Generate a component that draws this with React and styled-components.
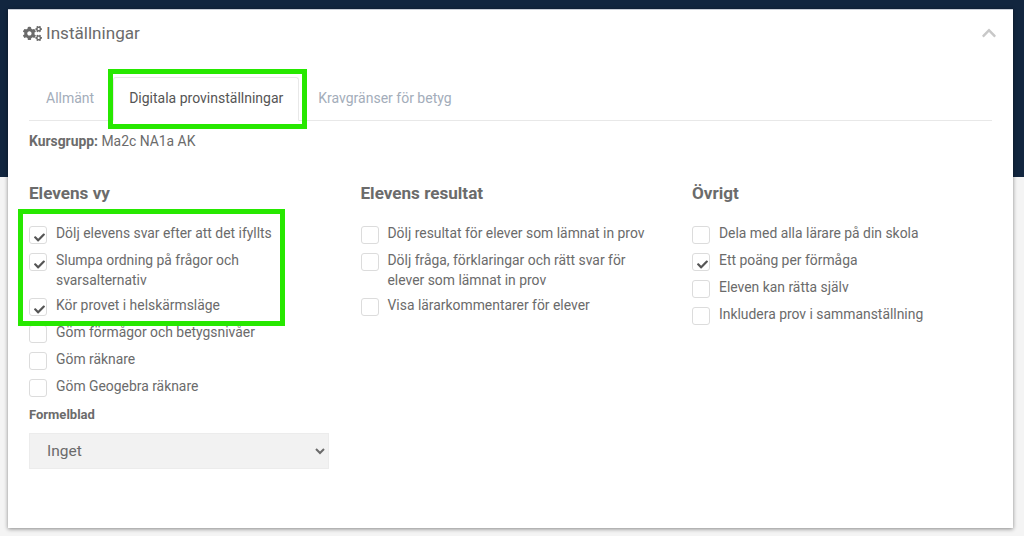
import React from 'react';
import styled, { createGlobalStyle } from 'styled-components';
import { FaCogs, FaChevronUp, FaCheck } from 'react-icons/fa';

const GlobalStyle = createGlobalStyle`
  html, body {
    margin: 0;
    padding: 0;
    overflow: hidden;
  }
  body {
    font-family: Roboto, "Liberation Sans", sans-serif;
    color: #6b6b6b;
  }
`;

const Page = styled.div`
  width: 1024px;
  height: 536px;
  padding: 9px 11px 0 8px;
  box-sizing: border-box;
  background: linear-gradient(#12263f 177px, #f4f4f4 177px);
`;

const Card = styled.div`
  position: relative;
  height: 519px;
  box-sizing: border-box;
  background: #fff;
  border-top: 1px solid #c9ced6;
  box-shadow: 0 1px 4px rgba(0, 0, 0, 0.45);
`;

const CardHeader = styled.div`
  display: flex;
  align-items: center;
  justify-content: space-between;
  height: 46px;
  padding: 0 16px 0 15px;
`;

const Title = styled.h3`
  display: flex;
  align-items: center;
  gap: 4px;
  margin: 0;
  font-size: 17.1px;
  font-weight: 400;
  color: #6b6b6b;
`;

const Collapse = styled.span`
  display: flex;
  color: #c8c8c8;
  font-size: 16px;
`;

const CardBody = styled.div`
  padding: 21px 21px 0 21px;
`;

const Tabs = styled.div`
  display: flex;
  gap: 3px;
  height: 44px;
  box-sizing: border-box;
  border-bottom: 1px solid #e8e8e8;
  padding-left: 1px;
`;

const Tab = styled.div`
  box-sizing: border-box;
  height: 44px;
  padding: 11px 15px 0;
  font-size: 14px;
  line-height: 18px;
  color: ${(p) => (p.$active ? '#555' : '#a3adba')};
  background: ${(p) => (p.$active ? '#fff' : 'transparent')};
  border: 1px solid ${(p) => (p.$active ? '#e8e8e8' : 'transparent')};
  border-bottom-color: ${(p) => (p.$active ? '#fff' : 'transparent')};
  border-radius: 3px 3px 0 0;
`;

const Group = styled.div`
  margin-top: 10px;
  font-size: 13.9px;
  line-height: 20px;
  color: #6b6b6b;
`;

const Columns = styled.div`
  display: grid;
  grid-template-columns: repeat(3, 331.5px);
  margin-top: 32px;
`;

const Heading = styled.h4`
  margin: 0 0 20px;
  font-size: 17.1px;
  line-height: 20px;
  font-weight: 700;
  color: #6b6b6b;
`;

const Options = styled.div`
  display: flex;
  flex-direction: column;
  gap: 5px;
  width: 300px;
`;

const Option = styled.div`
  display: flex;
  gap: 9px;
  font-size: 13.9px;
  line-height: 20px;
  color: #6b6b6b;
`;

const Box = styled.span`
  flex: none;
  display: flex;
  align-items: center;
  justify-content: center;
  width: 18px;
  height: 18px;
  margin: 3px 0 1px;
  padding: 4px 0 0 2px;
  box-sizing: border-box;
  border: 1px solid #dcdcdc;
  border-radius: 3px;
  background: #fff;
  color: #555;
  font-size: 11px;
`;

const FieldLabel = styled.div`
  margin-top: 9px;
  font-size: 13px;
  line-height: 16px;
  font-weight: 700;
  color: #6b6b6b;
`;

const Select = styled.select`
  display: block;
  width: 300px;
  height: 36px;
  margin-top: 10px;
  padding: 0 0 0 13px;
  border: 1px solid #ececec;
  border-radius: 0;
  background-color: #f2f2f2;
  font-family: Roboto, "Liberation Sans", sans-serif;
  font-size: 15.5px;
  color: #6b6b6b;
  outline: none;
`;

const Highlight = styled.div`
  position: absolute;
  box-sizing: border-box;
  border: 5px solid #27e800;
  left: ${(p) => p.$left}px;
  top: ${(p) => p.$top}px;
  width: ${(p) => p.$width}px;
  height: ${(p) => p.$height}px;
`;

const columns = [
  {
    title: 'Elevens vy',
    options: [
      ['Dölj elevens svar efter att det ifyllts', true],
      ['Slumpa ordning på frågor och svarsalternativ', true],
      ['Kör provet i helskärmsläge', true],
      ['Göm förmågor och betygsnivåer', false],
      ['Göm räknare', false],
      ['Göm Geogebra räknare', false],
    ],
    formula: true,
  },
  {
    title: 'Elevens resultat',
    options: [
      ['Dölj resultat för elever som lämnat in prov', false],
      ['Dölj fråga, förklaringar och rätt svar för elever som lämnat in prov', false],
      ['Visa lärarkommentarer för elever', false],
    ],
  },
  {
    title: 'Övrigt',
    options: [
      ['Dela med alla lärare på din skola', false],
      ['Ett poäng per förmåga', true],
      ['Eleven kan rätta själv', false],
      ['Inkludera prov i sammanställning', false],
    ],
  },
];

const App = () => (
  <Page>
    <GlobalStyle />
    <Card>
      <CardHeader>
        <Title>
          <FaCogs size={19} />
          Inställningar
        </Title>
        <Collapse><FaChevronUp /></Collapse>
      </CardHeader>
      <CardBody>
        <Tabs>
          <Tab>Allmänt</Tab>
          <Tab $active>Digitala provinställningar</Tab>
          <Tab>Kravgränser för betyg</Tab>
        </Tabs>
        <Group><b>Kursgrupp:</b> Ma2c NA1a AK</Group>
        <Columns>
          {columns.map((col) => (
            <div key={col.title}>
              <Heading>{col.title}</Heading>
              <Options>
                {col.options.map(([label, checked]) => (
                  <Option key={label}>
                    <Box>{checked && <FaCheck />}</Box>
                    <span>{label}</span>
                  </Option>
                ))}
              </Options>
              {col.formula && (
                <>
                  <FieldLabel>Formelblad</FieldLabel>
                  <Select defaultValue="Inget">
                    <option>Inget</option>
                  </Select>
                </>
              )}
            </div>
          ))}
        </Columns>
      </CardBody>
      <Highlight $left={100} $top={59} $width={199} $height={60} />
      <Highlight $left={10} $top={199} $width={267} $height={117} />
    </Card>
  </Page>
);

export default App;
